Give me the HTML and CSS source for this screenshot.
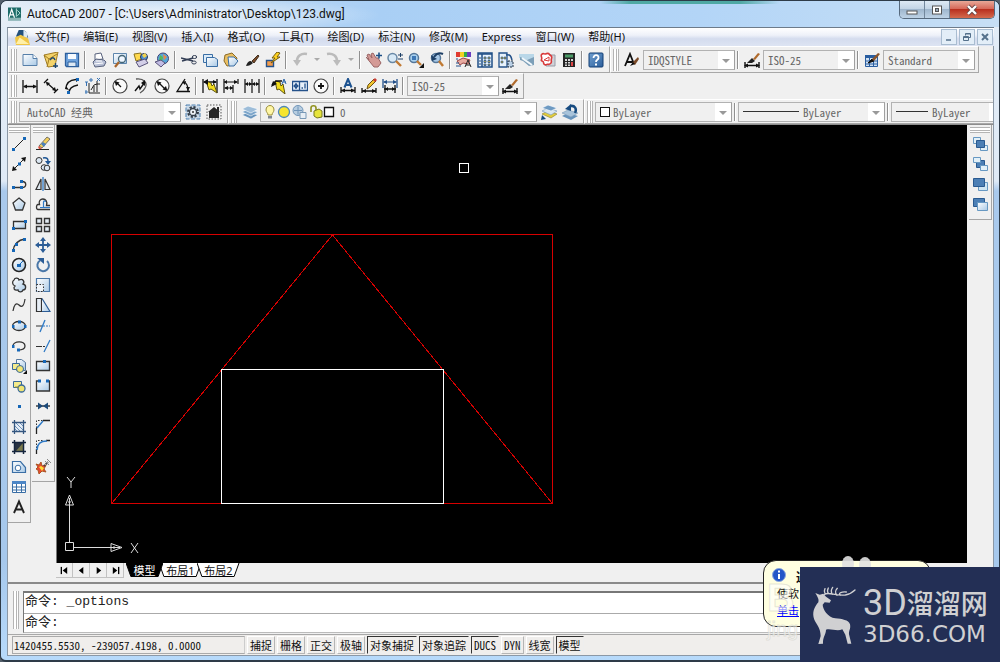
FILE: index.html
```html
<!DOCTYPE html>
<html lang="zh-CN">
<head>
<meta charset="utf-8">
<title>AutoCAD 2007 - [C:\Users\Administrator\Desktop\123.dwg]</title>
<link rel="stylesheet" href="styles.css">
</head>
<body>
<svg class="defs" aria-hidden="true">
  <defs>
    <linearGradient id="paper" x1="0" y1="0" x2="1" y2="1"><stop offset="0" stop-color="#ffffff"/><stop offset="1" stop-color="#a9c9e6"/></linearGradient>
    <linearGradient id="steel" x1="0" y1="0" x2="1" y2="1"><stop offset="0" stop-color="#6f9fd0"/><stop offset="1" stop-color="#2c5f9c"/></linearGradient>
    <symbol id="dimbrush" viewBox="0 0 16 16"><path d="M1 10v6M15 10v6M1 13.500h14" stroke="#111" stroke-width="1.400"/><path d="M0 13.500l4-2v4zM16 13.500l-4-2v4z" fill="#111"/><path d="M3 11l5-5 3 3-3 2z" fill="#222"/><path d="M9 7l5-6 2 1-5 6z" fill="#b06a2c"/></symbol>
  </defs>
</svg>
<div class="window">
  <header class="titlebar">
    <svg class="appicon" viewBox="0 0 14 14"><path d="M0 0h14v14H0z" fill="#1d6b68"/><path d="M1 11L4 2l3 9M2 8h4" stroke="#fff" fill="none" stroke-width="1.300"/><path d="M9 1v9M10 3l3 3-3 3" stroke="#bfe6df" fill="none"/><path d="M0 11h14v3H0z" fill="#d7e6ea" opacity=".6"/></svg>
    <h1 class="title">AutoCAD 2007 - [C:\Users\Administrator\Desktop\123.dwg]</h1>
    <div class="caption">
      <button class="cap" aria-label="最小化"><svg viewBox="0 0 14 12"><rect x="2" y="7" width="10" height="3" fill="#fff" stroke="#555"/></svg></button>
      <button class="cap" aria-label="最大化"><svg viewBox="0 0 14 12"><rect x="2.500" y="2" width="9" height="8" fill="#fff" stroke="#555"/><rect x="5.500" y="4.500" width="3" height="3" fill="#9ab" stroke="#555"/></svg></button>
      <button class="cap close" aria-label="关闭"><svg viewBox="0 0 14 12"><path d="M3 2l8 8M11 2l-8 8" stroke="#644" stroke-width="4"/><path d="M3 2l8 8M11 2l-8 8" stroke="#fff" stroke-width="2.400"/></svg></button>
    </div>
  </header>

  <nav class="menubar">
    <svg class="docicon" viewBox="0 0 16 16"><path d="M1 7L4 0h5l3 2 2 6z" fill="#23507c"/><path d="M9 0l4 3v5H9z" fill="#dce9f5"/><path d="M0 8l6-3 8 4 2 7H1z" fill="#f0c646"/><path d="M1 15L5 8l10 7z" fill="#fff0a8"/></svg>
    <button>文件(F)</button><button>编辑(E)</button><button>视图(V)</button><button>插入(I)</button><button>格式(O)</button><button>工具(T)</button><button>绘图(D)</button><button>标注(N)</button><button>修改(M)</button><button>Express</button><button>窗口(W)</button><button>帮助(H)</button>
    <div class="mdi">
      <button aria-label="最小化文档"><svg viewBox="0 0 10 10"><path d="M2 8h5" stroke="#55718c" stroke-width="1.500"/></svg></button>
      <button aria-label="还原文档"><svg viewBox="0 0 10 10"><path d="M3.500 3.500v-2h5v4h-2M1.500 4.500h5v4h-5zM1.500 5.500h5M3.500 2h5" fill="none" stroke="#55718c"/></svg></button>
      <button aria-label="关闭文档"><svg viewBox="0 0 10 10"><path d="M2 2l6 6M8 2l-6 6" stroke="#55718c" stroke-width="2"/></svg></button>
    </div>
  </nav>

  <div class="row row-std">
    <div class="toolbar">
      <i class="grip"></i>
      <button class="tb" aria-label="新建"><svg viewBox="0 0 16 16"><path d="M1 2.500h10l4 4v7H1z" fill="url(#paper)" stroke="#567fa9"/><path d="M11 2.500v4h4" fill="#fff" stroke="#567fa9"/></svg></button>
      <button class="tb" aria-label="打开"><svg viewBox="0 0 16 16"><path d="M1 3l9-2 5-1-3 14-7 1z" fill="#f4d36a" stroke="#a07b22"/><path d="M1 3l5 4-2 8M6 7l8-5" fill="none" stroke="#a07b22"/><path d="M7 8c2-3 4-3 5 0M10 14h5M12.500 11v5" fill="none" stroke="#1d466f" stroke-width="1.400"/></svg></button>
      <button class="tb" aria-label="保存"><svg viewBox="0 0 16 16"><path d="M1.500 1.500h13v13h-12l-1-1z" fill="#6fa3dd" stroke="#2d5f9c" stroke-width="1.300"/><path d="M4 2h8v5H4z" fill="#f7fbff"/><path d="M4 10h8v4.500H4z" fill="#dce8f3" stroke="#2d5f9c"/></svg></button>
      <i class="sep"></i>
      <button class="tb" aria-label="打印"><svg viewBox="0 0 16 16"><path d="M4 8V2l6-1 2 6z" fill="#fff" stroke="#58627d"/><path d="M2 10l3-3 8 1 2 2-2 4-9 1z" fill="#b8c0d6" stroke="#58627d"/><path d="M3 12l9-1M5 9h6" stroke="#fff"/></svg></button>
      <button class="tb" aria-label="打印预览"><svg viewBox="0 0 16 16"><path d="M1.500 1.500h13v10h-13z" fill="url(#paper)" stroke="#5e86ad"/><circle cx="10" cy="7" r="3.500" fill="#eef6ff" stroke="#456677" stroke-width="1.300"/><path d="M7 10l-4 5" stroke="#a9652b" stroke-width="2.200"/></svg></button>
      <button class="tb" aria-label="发布"><svg viewBox="0 0 16 16"><path d="M1 2l7-1 1 6-6 2z" fill="#ffd94d" stroke="#8c7420"/><circle cx="11" cy="5" r="3.500" fill="#4e8fd0" stroke="#223355"/><path d="M9 3l3-2 2 3-3 2z" fill="#f2d24c"/><path d="M3 10l9-3 3 4-9 4z" fill="#d3cfe8" stroke="#5b567c"/></svg></button>
      <button class="tb" aria-label="三维 DWF"><svg viewBox="0 0 16 16"><circle cx="9" cy="6.500" r="5.500" fill="#56a7d8" stroke="#444477"/><path d="M6 3l3 2-1 5-3-1z" fill="#58b858"/><path d="M9 2l4 3-3 3z" fill="#e9894a"/><path d="M1 10l6-2 4 3-4 4z" fill="#c2bce4" stroke="#5b567c"/></svg></button>
      <i class="sep"></i>
      <button class="tb" aria-label="剪切"><svg viewBox="0 0 16 16"><path d="M0 6l12 3M1 9l11-3" stroke="#333e55" stroke-width="1.400"/><ellipse cx="13.500" cy="5" rx="2.200" ry="1.500" fill="none" stroke="#333e55"/><ellipse cx="13" cy="10.500" rx="2.200" ry="1.500" fill="none" stroke="#333e55"/></svg></button>
      <button class="tb" aria-label="复制"><svg viewBox="0 0 16 16"><path d="M1.500 2.500h9v8h-9z" fill="#dcebf8" stroke="#3a6ea5"/><path d="M4.500 5.500h8l3 2v7h-11z" fill="url(#paper)" stroke="#3a6ea5"/></svg></button>
      <button class="tb" aria-label="粘贴"><svg viewBox="0 0 16 16"><path d="M2 3l7-2 5 5-2 7-8 1-3-5z" fill="#eabf62" stroke="#8c6a24"/><path d="M5 5h6l4 4-4 5H6z" fill="url(#paper)" stroke="#3a6ea5"/></svg></button>
      <button class="tb" aria-label="特性匹配"><svg viewBox="0 0 16 16"><path d="M2 14c1-3 2-5 5-5l2 2c-2 2-4 3-7 3z" fill="#222"/><path d="M8 9l6-6 1 1-5 7z" fill="#7b4a28" stroke="#443322"/></svg></button>
      <button class="tb" aria-label="块编辑器"><svg viewBox="0 0 16 16"><path d="M1.500 8.500h7v6h-7z" fill="#f39c4a" stroke="#24518a" stroke-width="1.400"/><path d="M12 0L7 6h3L6 11l9-6h-3l3-4z" fill="#ffd21e" stroke="#735c10"/></svg></button>
      <i class="sep"></i>
      <button class="tb" aria-label="放弃"><svg viewBox="0 0 16 16"><path d="M15 2C9 1 5 4 5 9" fill="none" stroke="#bbb" stroke-width="2.600"/><path d="M1 8h8l-4 6z" fill="#bbb"/></svg></button>
      <button class="drop" aria-label="放弃列表"></button>
      <button class="tb" aria-label="重做"><svg viewBox="0 0 16 16"><path d="M1 2c6-1 10 2 10 7" fill="none" stroke="#bbb" stroke-width="2.600"/><path d="M15 8H7l4 6z" fill="#bbb"/></svg></button>
      <button class="drop" aria-label="重做列表"></button>
      <i class="sep"></i>
      <button class="tb" aria-label="实时平移"><svg viewBox="0 0 16 16"><path d="M0 5l3 3-2-5 2-1 3 4-1-4 2-1 3 5 2 0 3 5-3 4H8z" fill="#d49a96" stroke="#9a6464"/><path d="M10 3.500h6M13 .5v6" stroke="#1d4f86" stroke-width="1.600"/></svg></button>
      <button class="tb" aria-label="实时缩放"><svg viewBox="0 0 16 16"><circle cx="5.500" cy="6" r="4.500" fill="#d8e9f6" stroke="#6888a6" stroke-width="1.500"/><path d="M9 9l5 5" stroke="#c17a33" stroke-width="2.400"/><path d="M11 3h5M13.500 1v4M11 7h5" stroke="#1d3f66"/></svg></button>
      <button class="tb" aria-label="窗口缩放"><svg viewBox="0 0 16 16"><circle cx="6" cy="6" r="4.500" fill="#a8d0ee" stroke="#55779a" stroke-width="1.500"/><path d="M4 4h4v4H4z" fill="#3e77b5"/><path d="M9 9l4 4" stroke="#c17a33" stroke-width="2.400"/><path d="M16 11v5h-5z" fill="#111"/></svg></button>
      <button class="tb" aria-label="缩放上一个"><svg viewBox="0 0 16 16"><circle cx="7" cy="6" r="4.500" fill="#a8c8e6" stroke="#55779a" stroke-width="1.500"/><path d="M14 2C10 0 7 2 5 5" fill="none" stroke="#1d3f66" stroke-width="2"/><path d="M2 3l1 6 5-2z" fill="#1d3f66"/><path d="M10 9l4 5" stroke="#c17a33" stroke-width="2.400"/></svg></button>
      <i class="sep"></i>
      <button class="tb" aria-label="特性"><svg viewBox="0 0 16 16"><path d="M0 0h4v5H0z" fill="#e03c31"/><path d="M4 0h4v5H4z" fill="#f2d024"/><path d="M8 0h3v5H8z" fill="#2fae4a"/><path d="M11 0h4v5h-4z" fill="#6a3fc0"/><path d="M1 9l6-3 7 2-2 4-5-1-3 2z" fill="#e8aaa0" stroke="#994444"/><path d="M0 7h2M0 11h3M0 14h5" stroke="#24518a"/><path d="M9 15l3-7 3 7M10 13h4" fill="none" stroke="#222"/></svg></button>
      <button class="tb" aria-label="设计中心"><svg viewBox="0 0 16 16"><path d="M1 1h14v14H1z" fill="#e8f2fb" stroke="#1f4f86" stroke-width="1.500"/><path d="M1 2h14M5 2v13" stroke="#1f4f86" stroke-width="1.500"/><path d="M2 6h2M2 9h2M2 12h2" stroke="#1f4f86"/><path d="M7 5h2v2H7zM11 5h2v2h-2zM7 8.500h2v2H7zM11 8.500h2v2h-2zM7 12h2v1.500H7zM11 12h2v1.500h-2z" fill="#e8c33f" stroke="#24518a" stroke-width=".8"/></svg></button>
      <button class="tb" aria-label="工具选项板"><svg viewBox="0 0 16 16"><path d="M1 1h8v14H1z" fill="#e8f2fb" stroke="#24518a" stroke-width="1.300"/><path d="M3 5h2v2H3zM3 9h2v2H3zM6 5h2v2H6z" fill="#c7a63a" stroke="#24518a" stroke-width=".6"/><path d="M8 3c4-1 5 1 6 5" fill="none" stroke="#24518a" stroke-width="1.500"/><path d="M10 9h5v6h-5z" fill="#b9cfe5" stroke="#223344" stroke-dasharray="2 1"/></svg></button>
      <button class="tb" aria-label="图纸集管理器"><svg viewBox="0 0 16 16"><path d="M0 2h15v4L9 8 0 6z" fill="#b9d7e8"/><path d="M1 5l7 3 7-3v8l-5 1-6-5-3-1z" fill="#7d9fb8"/><path d="M3 6l10 7" stroke="#f2f8fc" stroke-width="2"/></svg></button>
      <button class="tb" aria-label="标记集管理器"><svg viewBox="0 0 16 16"><path d="M4 3h11v11H6z" fill="#cfd2d8" stroke="#989ca6"/><path d="M1.500 2.500c2-2 3 0 4-.5s3-1 4 .5 3 1 2 4 1 3-1 5-3 0-4 1-3 0-3-2-3-1-2-3-1-3 0-5z" fill="#fff" stroke="#d93a3a" stroke-width="1.600"/><path d="M4 8l5-3v4z" fill="none" stroke="#d93a3a"/></svg></button>
      <button class="tb" aria-label="快速计算器"><svg viewBox="0 0 16 16"><path d="M2 1h12v14H2z" fill="#242424"/><path d="M4 2.500h8v3H4z" fill="#4b9a66"/><path d="M4 7h2v2H4zM7 7h2v2H7zM10 7h2v2h-2zM4 10h2v1.500H4zM7 10h2v1.500H7zM4 12.500h2V14H4zM7 12.500h2V14H7z" fill="#d5d5d5"/><path d="M10 10h2v4h-2z" fill="#d44"/></svg></button>
      <i class="sep"></i>
      <button class="tb" aria-label="帮助"><svg viewBox="0 0 16 16"><rect x="1" y="1" width="14" height="14" rx="1" fill="url(#steel)" stroke="#123f75"/><path d="M5.500 6c0-4 5.500-3.500 5 0-.3 2-2.500 1.500-2.500 4" fill="none" stroke="#fff" stroke-width="1.800"/><path d="M7 11.500h2v2H7z" fill="#fff"/></svg></button>
    </div>
    <div class="toolbar">
      <i class="grip"></i>
      <button class="tb" aria-label="文字样式"><svg viewBox="0 0 16 16"><path d="M1 14L6 2l4 10M3 10h6" fill="none" stroke="#111" stroke-width="1.800"/><path d="M8 11l6-6 1 2-4 6z" fill="#7b4a28"/><path d="M6 14l3-4 2 2z" fill="#111"/></svg></button>
      <span class="combo w92"><select aria-label="文字样式"><option>IDQSTYLE</option></select></span>
      <i class="sep"></i>
      <button class="tb" aria-label="标注样式"><svg><use href="#dimbrush"/></svg></button>
      <span class="combo w92"><select aria-label="标注样式"><option>ISO-25</option></select></span>
      <i class="sep"></i>
      <button class="tb" aria-label="表格样式"><svg viewBox="0 0 16 16"><path d="M1.500 3.500h12v11h-12z" fill="#cfe0f2" stroke="#2a5ea0"/><path d="M1 3h13v3H1z" fill="#2a5ea0"/><path d="M1 9h13M1 12h13M5.500 4v11M9.500 4v11" stroke="#2a5ea0"/><path d="M4 11l4-4 2 2z" fill="#111" stroke="#111"/><path d="M8 7l6-6 2 1-6 7z" fill="#8a552c"/></svg></button>
      <span class="combo w92"><select aria-label="表格样式"><option>Standard</option></select></span>
    </div>
  </div>

  <div class="row row-dim">
    <div class="toolbar">
      <i class="grip"></i>
      <button class="tb" aria-label="线性"><svg viewBox="0 0 16 16"><path d="M1 2v13M15 2v13M2 8.500h12" stroke="#111" stroke-width="1.300"/><path d="M1 8.500l4-2v4zM15 8.500l-4-2v4z" fill="#111"/></svg></button>
      <button class="tb" aria-label="对齐"><svg viewBox="0 0 16 16"><path d="M1 5l4-4M11 15l4-4M3.500 4.500l9 8" stroke="#111" stroke-width="1.300"/><path d="M3 4l4 1-3 3zM13 13l-4-1 3-3z" fill="#111"/></svg></button>
      <button class="tb" aria-label="弧长"><svg viewBox="0 0 16 16"><path d="M2 11C2 5 6 2 12 1.500M5 15c0-5 3-7 9-8" fill="none" stroke="#111" stroke-width="1.300"/><path d="M1 11l4 1-3-4zM12 0v4l3-2z" fill="#111"/><path d="M12 0h3v3h-3zM3 13h3v3H3z" fill="#1667b7"/></svg></button>
      <button class="tb" aria-label="坐标"><svg viewBox="0 0 16 16"><path d="M4 5v10h11M6 12l3-5 3-1v8M9 8v6M12 3v3h3" fill="none" stroke="#222"/><path d="M0 4h3M1.500 4v4M5 1h2v2H5zM12 0l3 3M15 0l-3 3M0 13h2v2H0z" fill="none" stroke="#3772b3"/></svg></button>
      <i class="sep"></i>
      <button class="tb" aria-label="半径"><svg viewBox="0 0 16 16"><circle cx="8" cy="8" r="7" fill="#fafafa" stroke="#444" stroke-width="1.200"/><path d="M4 4l5 5" stroke="#111" stroke-width="1.300"/><path d="M2.500 3l5 1.500L4 8z" fill="#111"/></svg></button>
      <button class="tb" aria-label="折弯"><svg viewBox="0 0 16 16"><path d="M3 1c8-1 12 4 9 9-1 2-3 4-5 5" fill="none" stroke="#555" stroke-width="1.300"/><path d="M2 13l4-5 1 3 5-7" fill="none" stroke="#111" stroke-width="1.400"/><path d="M12 2L8 5l4 3z" fill="#111"/></svg></button>
      <button class="tb" aria-label="直径"><svg viewBox="0 0 16 16"><circle cx="8" cy="8" r="7" fill="#fafafa" stroke="#444" stroke-width="1.200"/><path d="M4 4l8 8" stroke="#111" stroke-width="1.300"/><path d="M2.500 3l5 1.500L4 8zM13.500 13l-5-1.500L12 8z" fill="#111"/></svg></button>
      <button class="tb" aria-label="角度"><svg viewBox="0 0 16 16"><path d="M10 1L2 13.500h13M9 4c3 1 4 4 4 9" fill="none" stroke="#111" stroke-width="1.300"/><path d="M7 4l4-1-1 4zM11 9h4l-2 4z" fill="#111"/></svg></button>
      <i class="sep"></i>
      <button class="tb" aria-label="快速标注"><svg viewBox="0 0 16 16"><path d="M1 1v14M15 1v14M2 4h12" stroke="#111" stroke-width="1.300"/><path d="M4 3l5 2 1 3 2-2 3 9-6-4-2 1z" fill="#f2dc1c" stroke="#5d5310"/><path d="M1 4l5-3v6zM15 4l-4-2v4z" fill="#111"/></svg></button>
      <button class="tb" aria-label="基线"><svg viewBox="0 0 16 16"><path d="M1 1v14M1 4h13M2 10h8M10 7v8M15 1v5" stroke="#111" stroke-width="1.200"/><path d="M1 4l3-2v4zM15 4l-4-2v4zM1 10l4-2v4zM10 10L7 8v4z" fill="#111"/></svg></button>
      <button class="tb" aria-label="连续"><svg viewBox="0 0 16 16"><path d="M1 1v14M8 1v14M15 1v14M1 6h14" stroke="#111" stroke-width="1.200"/><path d="M1 6l3-2v4zM8 6L5 4v4zM8 6l3-2v4zM15 6l-3-2v4z" fill="#111"/></svg></button>
      <i class="sep"></i>
      <button class="tb" aria-label="快速引线"><svg viewBox="0 0 16 16"><path d="M4 3l5 1 1 4 2-2 2 10-6-5-2 1z" fill="#f2dc1c" stroke="#5d5310"/><path d="M1 7l4-4 6 0" fill="none" stroke="#111" stroke-width="1.500"/><path d="M0 9l2-6 4 3z" fill="#111"/><path d="M11 6l2-5 2 5M12 4h3" fill="none" stroke="#2b64a8"/></svg></button>
      <button class="tb" aria-label="公差"><svg viewBox="0 0 16 16"><path d="M.5 3.500h15v9H.5zM7.500 3.500v9" fill="#e7f0fa" stroke="#24518a" stroke-width="1.300"/><circle cx="4" cy="8" r="1.700" fill="none" stroke="#24518a"/><path d="M4 5v6M1.500 8h5M13 5.500v5M9.500 10h1.500" stroke="#24518a" stroke-width="1.300"/></svg></button>
      <button class="tb" aria-label="圆心标记"><svg viewBox="0 0 16 16"><circle cx="8" cy="8" r="7" fill="#fafafa" stroke="#444" stroke-width="1.200"/><path d="M5 8h6M8 5v6" stroke="#111" stroke-width="1.800"/></svg></button>
      <i class="sep"></i>
      <button class="tb" aria-label="编辑标注"><svg viewBox="0 0 16 16"><path d="M4.500 9.500L8 1l3.500 8.500M5.500 7h5" fill="none" stroke="#1c5290" stroke-width="2"/><path d="M1 9v6M15 9v6M1 12.500h14" stroke="#111" stroke-width="1.300"/><path d="M1 12.500l4-2v4zM15 12.500l-4-2v4z" fill="#111"/></svg></button>
      <button class="tb" aria-label="编辑标注文字"><svg viewBox="0 0 16 16"><path d="M1 10v5M15 10v5M1 13h14" stroke="#111" stroke-width="1.300"/><path d="M1 13l4-2v4zM15 13l-4-2v4z" fill="#111"/><path d="M6 11l1-4 6-6 2 2-6 6z" fill="#f3c52e" stroke="#6c5417"/><path d="M12 2l2-2 2 2-2 2z" fill="#c93b31"/></svg></button>
      <button class="tb" aria-label="标注更新"><svg viewBox="0 0 16 16"><path d="M1 1v9M15 1v9" stroke="#24518a" stroke-width="1.300"/><path d="M2 4h12" stroke="#24518a"/><path d="M1 4l4-2v4zM15 4l-4-2v4z" fill="#24518a"/><path d="M3 7v8M13 7v8M2 11h12" stroke="#111" stroke-width="1.300"/><path d="M3 11l3-2v4zM13 11l-3-2v4z" fill="#111"/></svg></button>
      <i class="sep"></i>
      <span class="combo w92"><select aria-label="当前标注样式"><option>ISO-25</option></select></span>
      <button class="tb" aria-label="标注样式管理器"><svg><use href="#dimbrush"/></svg></button>
    </div>
  </div>

  <div class="row row-prop">
    <div class="toolbar">
      <i class="grip"></i>
      <span class="combo w160 indent"><select aria-label="工作空间"><option>AutoCAD 经典</option></select></span>
      <button class="tb" aria-label="工作空间设置"><svg viewBox="0 0 16 16"><path d="M1 1h14v14H1z" fill="#c9d9e8" stroke="#4c7fae" stroke-dasharray="4 1.500"/><circle cx="8" cy="8" r="5" fill="none" stroke="#333d48" stroke-width="2" stroke-dasharray="2.200 1.700"/><circle cx="8" cy="8" r="3.500" fill="#edf3f8" stroke="#333d48" stroke-width="1.300"/><circle cx="8" cy="8" r="1" fill="#333"/></svg></button>
      <button class="tb" aria-label="我的工作空间"><svg viewBox="0 0 16 16"><path d="M1 1h14v14H1z" fill="none" stroke="#555" stroke-dasharray="1.500 1.500"/><path d="M2 8l6-5 6 5h-1v6H3V8z" fill="#262626"/><path d="M11 3h2v4h-2z" fill="#262626"/></svg></button>
    </div>
    <div class="toolbar">
      <i class="grip"></i>
      <button class="tb" aria-label="图层特性管理器"><svg viewBox="0 0 16 16"><path d="M0 11l6-3 10 3-7 4z" fill="#6793bb" stroke="#fff" stroke-width=".6"/><path d="M0 8l6-3 10 3-7 4z" fill="#7ba5ca" stroke="#fff" stroke-width=".6"/><path d="M0 5l6-3 10 3-7 4z" fill="#9dbdd9" stroke="#fff" stroke-width=".6"/></svg></button>
      <span class="combo w277">
        <svg class="state wide" viewBox="0 0 72 16"><path d="M2 6c0-6 8-6 8 0 0 2-2 3-2 5H4c0-2-2-3-2-5z" fill="#fff6a5" stroke="#998d38"/><path d="M4 12h4v2.500H4z" fill="#7e8794"/><circle cx="20" cy="8" r="5.500" fill="#f7e52e" stroke="#4d88b9" stroke-width="1.300"/><circle cx="34" cy="6.500" r="5" fill="#b7cde0" stroke="#6f94b8"/><path d="M30 6.500h8M34 2.500v8" stroke="#6f94b8"/><path d="M36 8.500h6v6h-6z" fill="#e7eef5" stroke="#7898b6"/><path d="M47 8V4c0-3 5-3 5 0v3" fill="none" stroke="#90911e" stroke-width="1.600"/><path d="M50 7l5-2 3 2v6l-5 1-3-2z" fill="#e6e43b" stroke="#77781e"/><path d="M60.500 3.500h9v9h-9z" fill="#fff" stroke="#111" stroke-width="1.300"/></svg>
        <select aria-label="图层"><option>0</option></select></span>
      <button class="tb" aria-label="将对象的图层置为当前"><svg viewBox="0 0 16 16"><path d="M1 10l6-3 9 3-6 4z" fill="#e2cc3c" stroke="#8d8123" stroke-width=".6"/><path d="M1 7l6-3 9 3-6 4z" fill="#d8e6f2" stroke="#6f94b8" stroke-width=".6"/><path d="M1 4l6-3 9 3-6 3z" fill="#6e9ac2" stroke="#fff" stroke-width=".6"/><path d="M0 16l1-5 4 4z" fill="#164a80"/></svg></button>
      <button class="tb" aria-label="上一个图层"><svg viewBox="0 0 16 16"><path d="M0 12l6-3 10 3-7 4z" fill="#6793bb"/><path d="M0 9l6-3 10 3-7 4z" fill="#a8c3da" stroke="#7a9ab8" stroke-width=".6"/><path d="M13 9c2-4 0-8-5-7" fill="none" stroke="#174b80" stroke-width="2.600"/><path d="M3 5l6-5v7z" fill="#174b80"/></svg></button>
    </div>
    <div class="toolbar grow">
      <i class="grip"></i>
      <span class="combo w137"><i class="swatch"></i><select aria-label="颜色"><option>ByLayer</option></select></span>
      <i class="sep"></i>
      <span class="combo w147"><i class="line"></i><select aria-label="线型"><option>ByLayer</option></select></span>
      <i class="sep"></i>
      <span class="combo last"><i class="line short"></i><select aria-label="线宽"><option>ByLayer</option></select></span>
    </div>
  </div>

  <main class="workspace">
    <div class="vbar">
      <i class="vgrip"></i>
      <button class="vb" aria-label="直线"><svg viewBox="0 0 16 16"><path d="M2 14L14 2" stroke="#222"/><path d="M1 12h3v3H1zM12 1h3v3h-3z" fill="#1667b7"/></svg></button>
      <button class="vb" aria-label="构造线"><svg viewBox="0 0 16 16"><path d="M2 14L14 2" stroke="#222"/><path d="M1 15l1-5 4 4zM15 1l-1 5-4-4z" fill="#111"/><path d="M7 6.500h3v3H7z" fill="#1667b7"/></svg></button>
      <button class="vb" aria-label="多段线"><svg viewBox="0 0 16 16"><path d="M2 11.500h9c5 0 5-6 0-6" fill="none" stroke="#333" stroke-width="1.300"/><path d="M1 10h3v3H1zM9 10h3v3H9zM9 4h3v3H9z" fill="#1667b7"/></svg></button>
      <button class="vb" aria-label="正多边形"><svg viewBox="0 0 16 16"><path d="M8 2l6 5-2.500 7h-7L2 7z" fill="url(#paper)" stroke="#333" stroke-width="1.300"/></svg></button>
      <button class="vb" aria-label="矩形"><svg viewBox="0 0 16 16"><path d="M2.500 4.500h12v7h-12z" fill="url(#paper)" stroke="#333" stroke-width="1.300"/><path d="M1 10h3v3H1zM13 3h3v3h-3z" fill="#1667b7"/></svg></button>
      <button class="vb" aria-label="圆弧"><svg viewBox="0 0 16 16"><path d="M2 14C3 7 7 3 14 2" fill="none" stroke="#333" stroke-width="1.300"/><path d="M1 12h3v3H1zM4 6h3v3H4zM12 1h3v3h-3z" fill="#1667b7"/></svg></button>
      <button class="vb" aria-label="圆"><svg viewBox="0 0 16 16"><circle cx="8" cy="8" r="6.500" fill="url(#paper)" stroke="#222" stroke-width="1.500"/><path d="M7 9l5-5" stroke="#1667b7"/><path d="M6 7h4v3H6z" fill="#1667b7"/></svg></button>
      <button class="vb" aria-label="修订云线"><svg viewBox="0 0 16 16"><path d="M3 3c1-3 5-2 5 0 4-2 6 2 4 4 4 1 3 6 0 6-1 3-5 2-5 0-4 1-5-2-3-4C1 8 1 4 3 3z" fill="url(#paper)" stroke="#333" stroke-width="1.300"/></svg></button>
      <button class="vb" aria-label="样条曲线"><svg viewBox="0 0 16 16"><path d="M2 14c1-6 3-9 6-6s5 1 6-6" fill="none" stroke="#333" stroke-width="1.200"/></svg></button>
      <button class="vb" aria-label="椭圆"><svg viewBox="0 0 16 16"><ellipse cx="8" cy="8" rx="6.500" ry="4.500" fill="url(#paper)" stroke="#333" stroke-width="1.300"/><path d="M7 2.500h3v3H7zM1 7h2.500v3H1zM13 7h2.500v3H13z" fill="#1667b7"/></svg></button>
      <button class="vb" aria-label="椭圆弧"><svg viewBox="0 0 16 16"><path d="M2 8c0-5 12-6 12 0 0 4-4 4-7 4" fill="none" stroke="#333" stroke-width="1.300"/><path d="M1 7h2.500v3H1zM6 10.500h3v3H6z" fill="#1667b7"/></svg></button>
      <button class="vb" aria-label="插入块"><svg viewBox="0 0 16 16"><path d="M5.500 1.500h5l4 3v8h-9z" fill="url(#paper)" stroke="#56789d"/><path d="M1.500 5.500h7v6h-7z" fill="#f4eb8c" stroke="#3a6a9a"/><circle cx="9" cy="11" r="3.500" fill="#f1e573" stroke="#3a6a9a"/><path d="M16 12v4h-4z" fill="#111"/></svg></button>
      <button class="vb" aria-label="创建块"><svg viewBox="0 0 16 16"><path d="M2.500 3.500h8v6h-8z" fill="#f4eb8c" stroke="#3a6a9a"/><circle cx="10.500" cy="10.500" r="3.500" fill="#f1e573" stroke="#3a6a9a" stroke-width="1.300"/><path d="M4 9h4" stroke="#9a9430"/></svg></button>
      <button class="vb" aria-label="点"><svg viewBox="0 0 16 16"><path d="M7 7h3v3H7z" fill="#1667b7"/></svg></button>
      <button class="vb" aria-label="图案填充"><svg viewBox="0 0 16 16"><path d="M3 3h10v10H3z" fill="#e6eef7"/><path d="M3 6l7 7M3 9l4 4M5 4l8 8M8 3l5 5" stroke="#6a90ba"/><path d="M1 3.500h14M1 12.500h14M3.500 1v14M12.500 1v14" stroke="#34567f" stroke-width="1.300"/></svg></button>
      <button class="vb" aria-label="渐变色"><svg viewBox="0 0 16 16"><path d="M3 3h10v10H3z" fill="#283242"/><path d="M12 4v8H5z" fill="#7c7b4c"/><path d="M1 3.500h14M1 12.500h14M3.500 1v14M12.500 1v14" stroke="#15253d" stroke-width="1.500"/></svg></button>
      <button class="vb" aria-label="面域"><svg viewBox="0 0 16 16"><path d="M1.500 2.500h8l5 6v5h-13z" fill="url(#paper)" stroke="#3a6ea5" stroke-width="1.200"/><circle cx="7" cy="9" r="2.800" fill="#fff" stroke="#3a6ea5"/></svg></button>
      <button class="vb" aria-label="表格"><svg viewBox="0 0 16 16"><path d="M1.500 2.500h13v11h-13z" fill="#fff" stroke="#3a6ea5"/><path d="M1 2h14v3H1z" fill="#4c86c6"/><path d="M1 8h14M1 11h14M5.500 5v9M10.500 5v9" stroke="#3a6ea5"/></svg></button>
      <button class="vb" aria-label="多行文字"><svg viewBox="0 0 16 16"><path d="M3 14L8 2.500 13 14M5 10.500h6" fill="none" stroke="#222" stroke-width="1.900"/></svg></button>
    </div>
    <div class="vbar">
      <i class="vgrip"></i>
      <button class="vb" aria-label="删除"><svg viewBox="0 0 16 16"><path d="M1 13.500h13" stroke="#222"/><path d="M4 10l8-9 3 2-8 9z" fill="#f2cf5c" stroke="#555" stroke-width=".8"/><path d="M6 8l3 3 2-3-3-2z" fill="#4a82bd"/><path d="M4 10l3 3H4l-1-2z" fill="#e45545"/></svg></button>
      <button class="vb" aria-label="复制对象"><svg viewBox="0 0 16 16"><circle cx="4" cy="4.500" r="3" fill="#dce8f3" stroke="#333"/><circle cx="9" cy="11.500" r="2.800" fill="#dce8f3" stroke="#333"/><circle cx="12" cy="12" r="2.800" fill="#dce8f3" stroke="#333"/><path d="M8 2c4-1 5 1 5 3" fill="none" stroke="#1d5594" stroke-width="1.500"/><path d="M10 5h6l-3 4z" fill="#1d5594"/></svg></button>
      <button class="vb" aria-label="镜像"><svg viewBox="0 0 16 16"><path d="M6 3v10.500H1zM10 3v10.500h5z" fill="#dfe8f0" stroke="#333" stroke-width="1.200"/><path d="M8 1v14" stroke="#2e79c5" stroke-width="1.300"/></svg></button>
      <button class="vb" aria-label="偏移"><svg viewBox="0 0 16 16"><path d="M15 9.500h-3.500C14 1 2 1 4.500 8.500H3c-2 0-2 5 0 5h12" fill="none" stroke="#333" stroke-width="1.300"/><path d="M5 11.500h3.500V6c0-1.500 2-1.500 2 0" fill="none" stroke="#2e79c5" stroke-width="1.200"/><path d="M8 11.500h7" stroke="#2e79c5" stroke-width="1.200"/></svg></button>
      <button class="vb" aria-label="阵列"><svg viewBox="0 0 16 16"><path d="M1.500 1.500h5v5h-5zM9.500 1.500h5v5h-5zM1.500 9.500h5v5h-5zM9.500 9.500h5v5h-5z" fill="#e1eaf3" stroke="#333" stroke-width="1.400"/></svg></button>
      <button class="vb" aria-label="移动"><svg viewBox="0 0 16 16"><path d="M8 2v12M2 8h12" stroke="#2b5c96" stroke-width="1.800"/><path d="M8 0l3 4H5zM8 16l3-4H5zM0 8l4-3v6zM16 8l-4-3v6z" fill="#2b5c96"/></svg></button>
      <button class="vb" aria-label="旋转"><svg viewBox="0 0 16 16"><path d="M12 4a5.800 5.800 0 1 1-7-.5" fill="none" stroke="#4a77a8" stroke-width="2"/><path d="M2 1h7v6z" fill="#2b5c96"/></svg></button>
      <button class="vb" aria-label="缩放"><svg viewBox="0 0 16 16"><path d="M1.500 1.500h13v13h-13z" fill="url(#paper)" stroke="#4a77a8" stroke-width="1.200"/><path d="M1.500 7.500h7v7h-7z" fill="#eef3f8" stroke="#333" stroke-dasharray="1.500 1.500"/></svg></button>
      <button class="vb" aria-label="拉伸"><svg viewBox="0 0 16 16"><path d="M1.500 1.500h5v13h-5z" fill="#e7eef5" stroke="#333" stroke-width="1.200"/><path d="M7 1.500l8 13H7" fill="url(#paper)" stroke="#2b5c96" stroke-width="1.200"/></svg></button>
      <button class="vb" aria-label="修剪"><svg viewBox="0 0 16 16"><path d="M1 8h6" stroke="#333"/><path d="M8 8h7" stroke="#2e79c5" stroke-dasharray="2 1"/><path d="M5 14l5-12" stroke="#2e79c5" stroke-width="1.300"/></svg></button>
      <button class="vb" aria-label="延伸"><svg viewBox="0 0 16 16"><path d="M1 8.500h4" stroke="#333"/><path d="M5 8.500h6" stroke="#333" stroke-dasharray="2 1"/><path d="M9 14l6-12" stroke="#2e79c5" stroke-width="1.300"/></svg></button>
      <button class="vb" aria-label="打断于点"><svg viewBox="0 0 16 16"><path d="M1.500 3.500h13v9h-13z" fill="url(#paper)" stroke="#333" stroke-width="1.300"/><path d="M8 2h3v3H8z" fill="#1667b7"/></svg></button>
      <button class="vb" aria-label="打断"><svg viewBox="0 0 16 16"><path d="M5 3H1.500v10h13V3H12" fill="url(#paper)" stroke="#333" stroke-width="1.300"/><path d="M3 1.500h3v3H3zM11 1.500h3v3h-3z" fill="#1667b7"/></svg></button>
      <button class="vb" aria-label="合并"><svg viewBox="0 0 16 16"><path d="M1 8h14" stroke="#222" stroke-width="1.300"/><path d="M3 4.500L8 8l-5 3.500zM13 4.500L8 8l5 3.500z" fill="#1c4a7a"/></svg></button>
      <button class="vb" aria-label="倒角"><svg viewBox="0 0 16 16"><path d="M1.500 15V9M8 1.500h7" stroke="#222" stroke-width="1.300"/><path d="M1.500 9V1.500H8" fill="none" stroke="#333" stroke-dasharray="1.500 1.500"/><path d="M2 9l6-7" stroke="#2e79c5" stroke-width="1.500"/></svg></button>
      <button class="vb" aria-label="圆角"><svg viewBox="0 0 16 16"><path d="M1.500 15v-5M11 1.500h4" stroke="#222" stroke-width="1.300"/><path d="M1.500 9V1.500H9" fill="none" stroke="#333" stroke-dasharray="1.500 1.500"/><path d="M2 11c0-6 3-9 10-9" fill="none" stroke="#2e79c5" stroke-width="1.500"/></svg></button>
      <button class="vb" aria-label="分解"><svg viewBox="0 0 16 16"><path d="M1 5l3 1 2-3 1 4 4-1-2 4 2 3-4-1-3 3-1-4-2-1 2-2z" fill="#e8492f" stroke="#aa5522"/><path d="M4 8l2-1 3 2-2 3z" fill="#ffdc35"/><path d="M9 7l4-4" stroke="#444" stroke-width="2" stroke-dasharray="1.500 1"/><path d="M12 0l4 4M10 2l4 4" stroke="#888"/></svg></button>
    </div>
    <section class="center">
      <div class="canvas">
        <svg class="drawing" role="img" aria-label="图形窗口">
          <g transform="translate(-57 -125)" fill="none" shape-rendering="crispEdges">
            <path d="M111.500 234.500H552.500V503.500H111.500z" stroke="#d60000"/>
            <path d="M112 503L332.500 235 552 503" stroke="#d60000"/>
            <path d="M221.500 369.500H443.500V503.500H221.500z" stroke="#fff"/>
            <path d="M459.500 163.500h9v9h-9z" stroke="#fff"/>
            <g stroke="#ddd" shape-rendering="auto">
              <path d="M65.500 542.500h8v8h-8zM69.500 542V505M74 547.500h38"/>
              <path d="M69.500 495l-4 10h8zM122 547.500l-11-4v8z"/>
              <path d="M69.500 498v7M68 502h3M112 547.500h8M114 546v3"/>
              <path d="M67 477l4 5 4-5M71 482v6M131 543l7 10M138 543l-7 10"/>
            </g>
          </g>
        </svg>
      </div>
      <div class="tabs">
        <button class="nav" aria-label="第一个"><svg viewBox="0 0 10 10"><path d="M1.500 1v8" stroke="#000" stroke-width="1.500"/><path d="M8 1v8L3 5z"/></svg></button>
        <button class="nav" aria-label="上一个"><svg viewBox="0 0 10 10"><path d="M7 1v8L2 5z"/></svg></button>
        <button class="nav" aria-label="下一个"><svg viewBox="0 0 10 10"><path d="M3 1v8l5-4z"/></svg></button>
        <button class="nav" aria-label="最后一个"><svg viewBox="0 0 10 10"><path d="M2 1v8l5-4z"/><path d="M8.500 1v8" stroke="#000" stroke-width="1.500"/></svg></button>
        <button class="tab active"><svg viewBox="0 0 38 14" preserveAspectRatio="none"><path d="M0 0l5 13.500h28L38 0z" fill="#000" stroke="#000"/></svg><span>模型</span></button>
        <button class="tab"><svg viewBox="0 0 44 14" preserveAspectRatio="none"><path d="M0 0l5 13.500h33L43 0" fill="#fff" stroke="#000"/></svg><span>布局1</span></button>
        <button class="tab"><svg viewBox="0 0 44 14" preserveAspectRatio="none"><path d="M0 0l5 13.500h33L43 0" fill="#fff" stroke="#000"/></svg><span>布局2</span></button>
      </div>
    </section>
    <aside class="rightdock">
      <div class="vbar">
        <i class="vgrip"></i>
        <button class="vb" aria-label="前置"><svg viewBox="0 0 16 16"><path d="M1.500 1.500h7v6h-7zM8.500 9.500h7v5h-7z" fill="#e2f0f8" stroke="#6798c2"/><path d="M4.500 4.500h8v7h-8z" fill="#4c7fb5" stroke="#2a5a90"/></svg></button>
        <button class="vb" aria-label="后置"><svg viewBox="0 0 16 16"><path d="M4.500 4.500h8v7h-8z" fill="#4c7fb5" stroke="#2a5a90"/><path d="M1.500 1.500h7v5h-7zM8.500 9.500h7v5h-7z" fill="#e2f0f8" stroke="#6798c2"/></svg></button>
        <button class="vb" aria-label="置于对象之上"><svg viewBox="0 0 16 16"><path d="M6.500 6.500h9v8h-9z" fill="#cfe5f2" stroke="#6798c2"/><path d="M1.500 2.500h11v8h-11z" fill="#4c7fb5" stroke="#2a5a90"/></svg></button>
        <button class="vb" aria-label="置于对象之下"><svg viewBox="0 0 16 16"><path d="M1.500 2.500h11v8h-11z" fill="#4c7fb5" stroke="#2a5a90"/><path d="M5.500 6.500h10v8h-10z" fill="url(#paper)" stroke="#6798c2"/></svg></button>
      </div>
    </aside>
  </main>

  <section class="command">
    <i class="grip"></i>
    <div class="cmdbox">
      <div class="history">命令: _options</div>
      <div class="prompt"><label for="cmd">命令:</label><input id="cmd" type="text" autocomplete="off"></div>
    </div>
  </section>

  <footer class="status">
    <output class="coords">1420455.5530, -239057.4198, 0.0000</output>
    <button class="st">捕捉</button><button class="st">栅格</button><button class="st">正交</button><button class="st">极轴</button><button class="st on">对象捕捉</button><button class="st on">对象追踪</button><button class="st on">DUCS</button><button class="st">DYN</button><button class="st">线宽</button><button class="st on">模型</button>
  </footer>
</div>

<div class="balloon">
  <div class="b-head"><svg class="info" viewBox="0 0 14 14"><circle cx="7" cy="7" r="6.500" fill="#2456c8" stroke="#8aa6dd"/><path d="M7 6v5M7 2.500v2" stroke="#fff" stroke-width="2"/></svg><strong>通</strong></div>
  <p>使软</p>
  <a href="#">单击</a>
</div>
<div class="wm">
  <span class="wm-b">B</span>
  <span class="wm-j">jing</span>
</div>
<svg class="paw" viewBox="0 0 34 14" aria-hidden="true"><ellipse cx="8" cy="9" rx="6" ry="8"/><ellipse cx="25" cy="10" rx="6" ry="8"/></svg>
<div class="brand">
  <svg class="deer" viewBox="213 132 136 180" aria-hidden="true">
    <path fill="#d0d0d2" d="M225 156L238 161 249 158 257 167 272 178 268 185 253 184 247 191C248 206 262 228 285 232 305 234 325 237 329 250 332 264 325 268 326 280L333 308 322 308 315 281 306 265C290 272 272 262 257 266 257 280 247 287 248 308L234 309 241 285C241 262 230 252 222 236 214 215 222 198 234 184 236 176 234 171 225 156z"/>
    <path fill="none" stroke="#d0d0d2" stroke-width="4" stroke-linecap="round" d="M252 161C262 150 285 166 315 162 330 159 338 153 344 147M254 158C250 152 252 147 254 143M264 157C259 150 262 145 264 141M276 160C270 150 274 143 277 139M290 163C283 156 286 147 291 142M300 163C292 155 305 152 318 153"/>
  </svg>
  <div class="brand-text">
    <div class="brand-cn"><span class="latin">3D</span><span>溜溜网</span></div>
    <div class="brand-url">3D66.COM</div>
  </div>
</div>
</body>
</html>
```
FILE: styles.css
```css
* { box-sizing: border-box; }
body {
  margin: 0;
  overflow: hidden;
  background: #55606c;
  color: #111;
  font: 12px/16px "Noto Sans", "Noto Sans CJK SC", sans-serif;
}
button {
  margin: 0;
  padding: 0;
  border: 0;
  background: none;
  color: inherit;
  font: inherit;
}
svg { display: block; }
.defs { position: absolute; width: 0; height: 0; }

.window {
  display: flex;
  flex-direction: column;
  height: 100vh;
  padding: 0 5px 4px 6px;
  border: 1px solid #2e3b48;
  border-bottom-width: 2px;
  border-radius: 7px 7px 6px 6px;
  background: linear-gradient(#e3edf7 0, #dfeaf6 180px, #a9c9ec 190px, #a6c8ec 85%, #b7dafb 100%);
}

/* Title bar */
.titlebar {
  display: flex;
  flex: none;
  align-items: center;
  height: 26px;
  margin: 0 -5px 0 -6px;
  padding-left: 7px;
  border-radius: 6px 6px 0 0;
  background:
    linear-gradient(90deg, transparent 60%, #4fa9a4 63%, #4fa9a4 74%, transparent 78%) 0 0 / 100% 3px no-repeat,
    radial-gradient(ellipse 200px 18px at 180px 14px, rgba(255,255,255,.75), transparent),
    linear-gradient(90deg, #e6eef7 0, #c2daf2 14%, #a9cff5 38%, #b3d5f7 70%, #c7dff5 100%);
}
.appicon { width: 13px; height: 14px; margin-right: 6px; }
.title { margin: 0; font: 400 12px/16px Roboto, sans-serif; white-space: nowrap; }
.caption {
  display: flex;
  align-self: flex-start;
  height: 18px;
  margin: 0 4px 0 auto;
  overflow: hidden;
  border: 1px solid #56697d;
  border-top: 0;
  border-radius: 0 0 5px 5px;
}
.cap {
  display: grid;
  place-items: center;
  width: 25px;
  border-right: 1px solid #72879c;
  background: linear-gradient(#dde9f4 0, #c3d5e6 45%, #9fb6cd 50%, #bed3e6 100%);
}
.cap svg { width: 14px; height: 12px; }
.cap.close {
  width: 44px;
  border: 0;
  background: linear-gradient(#e8a898 0, #d7695a 45%, #b9301f 50%, #d46a4d 100%);
}

/* Menu */
.menubar {
  display: flex;
  flex: none;
  align-items: center;
  gap: 14px;
  height: 19px;
  padding: 0 1px 0 7px;
  border-top: 1px solid #6d7b8a;
  border-left: 1px solid #8b98a6;
  background: linear-gradient(#fff 0, #eef1f9 40%, #d4dcee 60%, #dde4f3 100%);
  font-size: 11px;
  white-space: nowrap;
}
.docicon { width: 15px; height: 15px; margin-right: -9px; }
.mdi { display: flex; margin-left: auto; gap: 2px; }
.mdi button {
  display: grid;
  place-items: center;
  width: 16px;
  height: 16px;
  border: 1px solid #a9bdd1;
  background: #e3eef8;
}
.mdi svg { width: 10px; height: 10px; }

/* Toolbars */
.row {
  display: flex;
  flex: none;
  overflow: hidden;
  border-left: 1px solid #8b98a6;
  border-right: 1px solid #8b98a6;
  background: #f0f0f0;
}
.row-std { height: 27px; }
.row-dim { height: 26px; }
.row-prop { height: 26px; border-bottom: 1px solid #8d8d8d; }
.toolbar {
  display: flex;
  align-items: center;
  flex: none;
  padding: 0 3px 0 2px;
  border: 1px solid #a8a8a8;
  border-top-color: #fff;
  border-left-color: #fff;
}
.toolbar.grow { flex: 1 1 0; min-width: 0; padding-right: 0; border-right: 0; }
.grip {
  flex: none;
  width: 6px;
  height: 22px;
  margin-right: 2px;
  border: solid #b4b4b4;
  border-width: 0 1px;
  background: linear-gradient(90deg, #fff 2px, #b4b4b4 2px, #b4b4b4 3px, #fff 3px);
}
.tb { display: grid; flex: none; place-items: center; width: 21px; height: 21px; }
.tb svg { width: 16px; height: 16px; }
.drop { width: 13px; height: 20px; flex: none; display: grid; place-items: center; }
.drop::after { content: ""; border: 3px solid transparent; border-top-color: #aaa; border-bottom: 0; }
.sep { flex: none; width: 2px; height: 18px; margin: 0 2px; border-left: 1px solid #909090; border-right: 1px solid #fff; }

.combo {
  position: relative;
  display: flex;
  align-items: center;
  flex: none;
  height: 20px;
  border: 1px solid #b2b2b2;
  border-right-color: #a0a0a0;
  background: #f0f0f0;
}
.combo::after {
  content: "";
  position: absolute;
  top: 0;
  right: 0;
  bottom: 0;
  width: 16px;
  background: #fff;
  pointer-events: none;
}
.combo::before {
  content: "";
  position: absolute;
  z-index: 1;
  top: 8px;
  right: 4px;
  border: 4px solid transparent;
  border-top-color: #999;
  border-bottom: 0;
  pointer-events: none;
}
.combo select {
  flex: 1;
  min-width: 0;
  height: 18px;
  padding: 0 0 0 4px;
  border: 0;
  outline: 0;
  appearance: none;
  background: none;
  color: #666;
  font: 11px/16px "Noto Sans Mono CJK SC", "Liberation Mono", monospace;
}
.w92 { width: 92px; margin-left: 1px; }
.w137 { width: 137px; }
.w147 { width: 147px; }
.w160 { width: 162px; margin-right: 1px; }
.w277 { width: 277px; margin-right: 1px; }
.indent select { padding-left: 7px; }
.last { width: 115px; }
.state { flex: none; height: 16px; }
.wide { width: 72px; margin-left: 3px; }
.swatch { width: 10px; height: 10px; margin-left: 4px; border: 1px solid #111; background: #fff; }
.swatch + select { padding-left: 3px; }
.line { flex: none; width: 56px; height: 1px; margin-left: 4px; background: #333; }
.line.short { width: 32px; }

/* Work area */
.workspace {
  display: flex;
  flex: 1;
  min-height: 0;
  border-left: 1px solid #8b98a6;
  border-right: 1px solid #8b98a6;
  background: #f0f0f0;
}
.vbar {
  display: flex;
  flex-direction: column;
  align-items: center;
  align-self: flex-start;
  width: 23px;
  padding: 2px 0 4px;
  border-right: 1px solid #a5a5a5;
  border-bottom: 1px solid #a5a5a5;
}
.vbar + .vbar { margin-left: 1px; }
.vgrip { width: 20px; height: 6px; margin-bottom: 1px; border: solid #b4b4b4; border-width: 1px 0; background: linear-gradient(#fff 2px, #b4b4b4 2px, #b4b4b4 3px, #fff 3px); }
.vb { display: grid; flex: none; place-items: center; width: 20px; height: 20px; }
.vb:nth-child(5n) { margin-bottom: 1px; }
.vb svg { width: 16px; height: 16px; }
.center { display: flex; flex: 1; flex-direction: column; min-width: 0; margin-left: 1px; }
.canvas { flex: 1; min-height: 0; overflow: hidden; border-left: 1px solid #777; background: #000; }
.drawing { width: 100%; height: 100%; }
.tabs { display: flex; flex: none; height: 19px; padding-bottom: 4px; font-size: 11px; line-height: 14px; }
.nav { display: grid; place-items: center; width: 17px; border-right: 1px solid #c2c2c2; border-bottom: 1px solid #c2c2c2; }
.nav svg { width: 9px; height: 9px; }
.tab { position: relative; width: 43px; height: 15px; margin-right: -5px; }
.tab.active { z-index: 1; width: 37px; margin-left: 2px; margin-right: -4px; color: #fff; }
.tab svg { position: absolute; inset: 0; width: 100%; height: 14px; }
.tab span { position: relative; }
.rightdock { flex: none; width: 26px; padding-left: 2px; }

/* Command window */
.command {
  display: flex;
  flex: none;
  height: 53px;
  padding: 9px 0 0 5px;
  border: solid #8b98a6;
  border-width: 0 1px;
  background: #f0f0f0;
  box-shadow: inset 0 2px #8a8a8a, inset 0 -1px #a8a8a8;
}
.command .grip { height: 38px; margin-right: 4px; }
.cmdbox {
  flex: 1;
  height: 42px;
  border-top: 2px solid #777;
  border-left: 1px solid #777;
  border-bottom: 1px solid #bbb;
  background: #fff;
  color: #222;
  font: 12px/18px "Liberation Mono", "Noto Sans CJK SC", monospace;
}
.history { height: 21px; padding-left: 1px; border-bottom: 1px solid #aaa; line-height: 17px; }
.prompt { display: flex; padding-left: 1px; }
.history, .prompt { font-size: 13px; }
.prompt input { flex: 1; min-width: 0; border: 0; outline: 0; padding: 0 4px; background: none; font: inherit; }

/* Status bar */
.status {
  display: flex;
  flex: none;
  align-items: center;
  gap: 2px;
  height: 21px;
  padding-left: 4px;
  border: solid #8b98a6;
  border-width: 0 1px 1px;
  background: #f0eeec;
  font: 11px/16px "Noto Sans Mono CJK SC", "Noto Sans CJK SC", monospace;
}
.coords { width: 233px; height: 18px; padding-left: 1px; border: 1px solid #aaa; border-right-color: #ccc; }
.st { height: 18px; padding: 0 2px; border: 1px solid; border-color: #fff #b5b5b5 #b5b5b5 #fff; line-height: 15px; }
.st.on { border-color: #333 #eee #eee #333; }

/* Notification balloon */
.balloon {
  position: absolute;
  left: 763px;
  top: 560px;
  width: 168px;
  height: 67px;
  padding: 7px 0 0 13px;
  border: 1px solid #222;
  border-radius: 13px;
  background: #ffffe1;
  font: 11px/17px "Noto Sans CJK SC", sans-serif;
}
.b-head { display: flex; gap: 10px; margin-left: -5px; font-size: 12px; }
.info { width: 14px; height: 14px; }
.balloon p { margin: 0; }
.balloon a { color: #00f; }
.wm { position: absolute; left: 767px; top: 577px; display: grid; color: rgba(255,255,255,.6); -webkit-text-stroke: 1px rgba(200,200,190,.45); pointer-events: none; }
.wm-b { font: bold 38px/42px "Liberation Sans", sans-serif; }
.wm-j { font: 20px/20px "Liberation Sans", sans-serif; }
.paw { position: absolute; left: 840px; top: 555px; width: 34px; height: 14px; fill: rgba(225,225,225,.9); }

/* Site badge */
.brand {
  position: absolute;
  right: 0;
  bottom: 0;
  display: flex;
  align-items: flex-start;
  width: 200px;
  height: 95px;
  padding: 18px 0 0 11px;
  background: #232f55;
  color: #d0d0d2;
}
.deer { flex: none; width: 46px; height: 60px; margin-right: 6px; }
.brand-cn { display: flex; align-items: center; height: 36px; font: 500 27px/36px "Noto Sans CJK SC", sans-serif; white-space: nowrap; }
.brand-cn .latin { font: 36px/36px Roboto, sans-serif; }
.brand-url { font: 23px/26px "DejaVu Sans", sans-serif; }
```
